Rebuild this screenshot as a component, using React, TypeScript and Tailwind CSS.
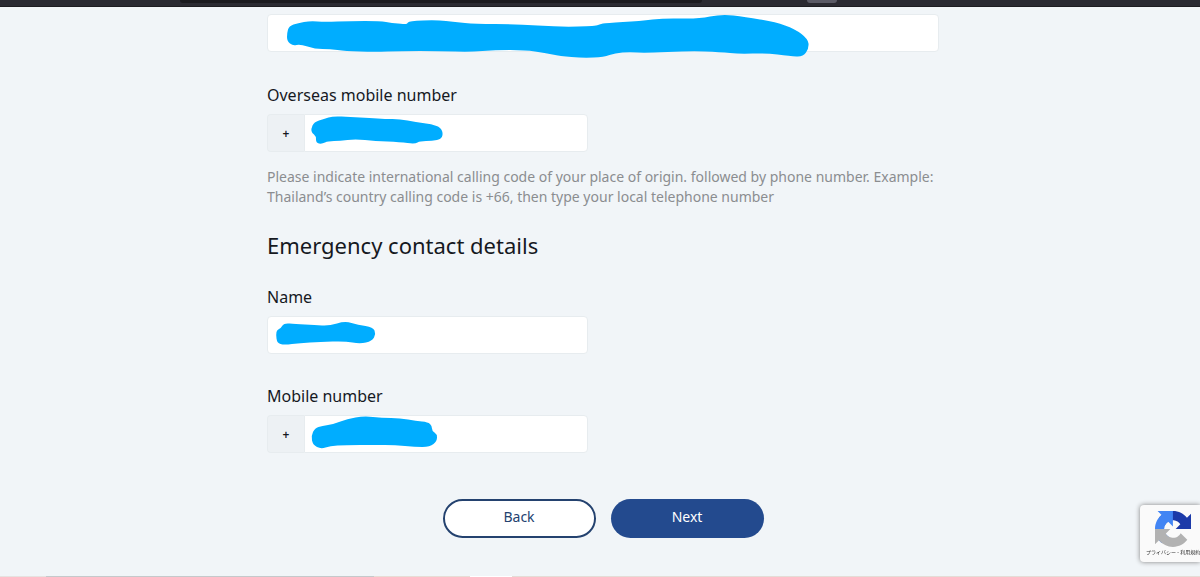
import type { ReactNode } from 'react';

type Point = [number, number];

const ADDRESS_MARK: Point[] = [
  [287, 33], [289, 26], [298, 23], [310, 21], [325, 22], [350, 21], [380, 21], [392, 23], [404, 24], [407, 24],
  [409, 21], [437, 20], [455, 22], [475, 24], [515, 24], [560, 27], [596, 26], [600, 24], [606, 23], [640, 21],
  [665, 18], [698, 19], [722, 14], [745, 17], [775, 22], [795, 29], [808, 39], [809, 48], [803, 57], [790, 56],
  [765, 53], [740, 54], [720, 52], [690, 51], [645, 53], [630, 52], [615, 53], [604, 57], [583, 58], [560, 56],
  [545, 53], [525, 50], [495, 50], [470, 52], [440, 51], [400, 51], [375, 52], [345, 51], [330, 49], [315, 49],
  [300, 44], [293, 46], [287, 41],
];

const OVERSEAS_MARK: Point[] = [
  [311, 129], [314, 122], [324, 119], [333, 116], [350, 117], [370, 118], [385, 119], [400, 119], [415, 122],
  [437, 125], [443, 131], [442, 139], [432, 141], [420, 141], [415, 144], [400, 142], [375, 141], [355, 139],
  [340, 141], [328, 141], [322, 144], [316, 143], [316, 136], [312, 133],
];

const NAME_MARK: Point[] = [
  [276, 334], [277, 330], [281, 328], [284, 323], [295, 324], [315, 325], [329, 326], [345, 321], [358, 325],
  [373, 327], [376, 334], [372, 341], [360, 344], [345, 341], [320, 342], [300, 343], [284, 345], [277, 343],
];

const MOBILE_MARK: Point[] = [
  [311, 436], [315, 428], [322, 426], [334, 424], [347, 419], [364, 416], [382, 418], [400, 418], [416, 421],
  [428, 422], [432, 426], [432, 431], [437, 434], [437, 441], [430, 447], [415, 447], [395, 445], [375, 445],
  [345, 445], [330, 446], [321, 449], [313, 445],
];

function smoothPath(points: Point[]): string {
  const mid = (a: Point, b: Point) => `${(a[0] + b[0]) / 2} ${(a[1] + b[1]) / 2}`;
  const start = mid(points[points.length - 1], points[0]);
  const curves = points.map((p, i) => `Q${p[0]} ${p[1]} ${mid(p, points[(i + 1) % points.length])}`);
  return `M${start}${curves.join('')}Z`;
}

function Mark({ points, viewBox, className }: { points: Point[]; viewBox: string; className: string }) {
  return (
    <svg
      aria-hidden="true"
      viewBox={viewBox}
      className={`pointer-events-none absolute top-0 left-0 overflow-visible ${className}`}
    >
      <path d={smoothPath(points)} fill="#00adff" />
    </svg>
  );
}

const boxClass = 'h-[38px] w-full rounded border border-[#e7ecef] bg-white px-3 text-sm outline-none';

function Field({ id, label, prefix, children }: { id: string; label: string; prefix?: boolean; children: ReactNode }) {
  return (
    <div className="max-w-[321px]">
      <label htmlFor={id} className="block text-base leading-6 text-[#16191f]">
        {label}
      </label>
      <div className="relative mt-[7px] flex">
        {prefix && (
          <span className="flex w-[37px] shrink-0 items-center justify-center rounded-l border border-r-0 border-[#e7ecef] bg-[#edf1f4] pt-px text-xs font-semibold text-[#16191f]">
            +
          </span>
        )}
        <input
          id={id}
          type={prefix ? 'tel' : 'text'}
          className={prefix ? `${boxClass} min-w-0 rounded-l-none` : boxClass}
        />
        {children}
      </div>
    </div>
  );
}

function BrowserEdge() {
  return (
    <div className="flex h-[7px] items-start border-b border-[#1d1d21] bg-[#2b2b32]">
      <div className="ml-[15%] h-[3px] w-[43.5%] rounded-b-sm bg-[#1b1b1f]" />
      <div className="ml-[8.75%] h-[3px] w-[30px] rounded-b-sm bg-[#5b5b66]" />
    </div>
  );
}

function CaptchaBadge() {
  return (
    <aside className="fixed right-0 bottom-[15px] h-[57px] w-[60px] overflow-hidden rounded-l-sm bg-[#fafafa] pt-[6px] shadow-[0_0_5px_#808080]">
      <svg viewBox="0 0 64 64" className="ml-[15px] size-9" aria-hidden="true">
        <path
          fill="#1c3aa9"
          d="M64 31.955l-.033-1.37V4.687l-7.16 7.16C50.948 4.674 42.033.093 32.05.093c-10.4 0-19.622 4.96-25.458 12.64l11.736 11.86a15.55 15.55 0 0 1 4.754-5.334c2.05-1.6 4.952-2.906 8.968-2.906.485 0 .86.057 1.135.163 4.976.393 9.288 3.14 11.828 7.124l-8.307 8.307L64 31.953"
        />
        <path
          fill="#4285f4"
          d="M31.862.094l-1.37.033H4.594l7.16 7.16C4.58 13.147 0 22.06 0 32.046c0 10.4 4.96 19.622 12.64 25.458L24.5 45.768a15.55 15.55 0 0 1-5.334-4.754c-1.6-2.05-2.906-4.952-2.906-8.968 0-.485.057-.86.163-1.135.393-4.976 3.14-9.288 7.124-11.828l8.307 8.307L31.86.095"
        />
        <path
          fill="#b2b2b2"
          d="M.001 32.045l.033 1.37v25.898l7.16-7.16c5.86 7.173 14.774 11.754 24.76 11.754 10.4 0 19.622-4.96 25.458-12.64l-11.736-11.86a15.55 15.55 0 0 1-4.754 5.334c-2.05 1.6-4.952 2.906-8.968 2.906-.485 0-.86-.057-1.135-.163-4.976-.393-9.288-3.14-11.828-7.124l8.307-8.307c-10.522.04-22.4.066-27.295-.005"
        />
      </svg>
      <p className="ml-[6px] font-['Liberation_Sans','Noto_Sans_CJK_JP',sans-serif] text-[5px] leading-[10px] whitespace-nowrap text-[#333]">
        プライバシー - 利用規約
      </p>
    </aside>
  );
}

export default function App() {
  return (
    <div className="flex min-h-screen flex-col bg-[#f1f5f8] font-['Noto_Sans',sans-serif] text-[#16191f]">
      <BrowserEdge />
      <main className="flex-1 pt-[7px] pl-[6px]">
        <form className="mx-auto max-w-2xl" onSubmit={(e) => e.preventDefault()}>
          <div className="relative">
            <input aria-label="Address" type="text" className={`${boxClass} block`} />
            <Mark points={ADDRESS_MARK} viewBox="267 14 672 38" className="h-[38px] w-[672px]" />
          </div>

          <div className="mt-[31px]">
            <Field id="overseas" label="Overseas mobile number" prefix>
              <Mark points={OVERSEAS_MARK} viewBox="267 114 321 38" className="h-[38px] w-[321px]" />
            </Field>
          </div>
          <p className="mt-[15px] text-sm leading-5 text-[#8b8d90]">
            Please indicate international calling code of your place of origin. followed by phone number. Example:
            Thailand’s country calling code is +66, then type your local telephone number
          </p>

          <h2 className="mt-[22px] text-[22px] leading-8">Emergency contact details</h2>
          <div className="mt-6 flex flex-col gap-[30px]">
            <Field id="name" label="Name">
              <Mark points={NAME_MARK} viewBox="267 316 321 38" className="h-[38px] w-[321px]" />
            </Field>
            <Field id="mobile" label="Mobile number" prefix>
              <Mark points={MOBILE_MARK} viewBox="267 415 321 38" className="h-[38px] w-[321px]" />
            </Field>
          </div>

          <div className="mt-[46px] mb-[38px] flex justify-center gap-[15px] text-sm">
            <button
              type="button"
              className="h-[39px] w-[153px] rounded-full border-2 border-[#24426f] bg-white pb-[3px] text-[#24426f]"
            >
              Back
            </button>
            <button type="submit" className="h-[39px] w-[153px] rounded-full bg-[#234a8e] pb-[3px] text-white">
              Next
            </button>
          </div>
        </form>
      </main>
      <div className="flex h-px">
        <div className="w-[46px] bg-[#e6e2e0]" />
        <div className="w-[328px] bg-[#c5c9cb]" />
        <div className="w-[96px] bg-[#e7dcd5]" />
        <div className="w-[42px] bg-white" />
        <div className="flex-1 bg-[#e4dcd6]" />
      </div>
      <CaptchaBadge />
    </div>
  );
}
